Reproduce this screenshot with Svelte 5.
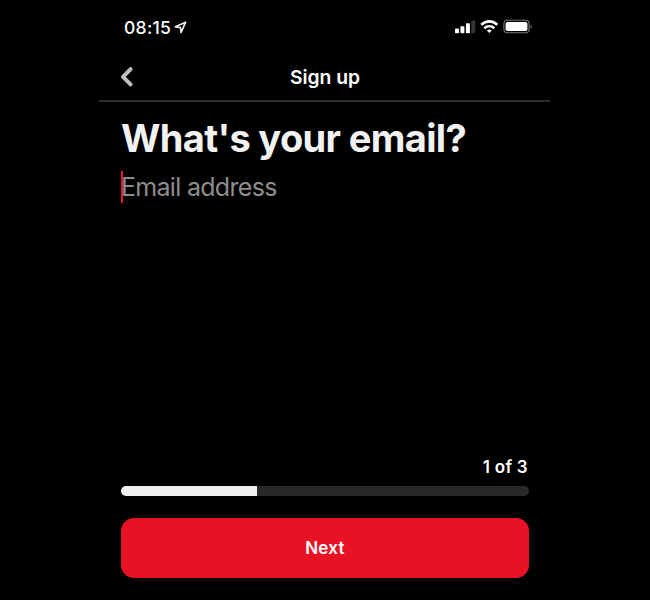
<script>
  const step = 1;
  const total = 3;
  let email = $state('');
</script>

<main>
  <section class="phone">
    <div class="status">
      <span class="time">08:15</span>
      <svg class="loc" width="13" height="13" viewBox="0 0 13 13">
        <path d="M11.6 1.2 L1.4 5.8 L6.4 6.5 L7.1 11.5 Z" />
      </svg>
      <svg class="signals" width="79" height="16" viewBox="0 0 79 16">
        <g fill="#fff">
          <rect x="0" y="9.4" width="4" height="4.8" rx="0.8" />
          <rect x="5.4" y="7.2" width="4" height="7" rx="0.8" />
          <rect x="10.9" y="4.2" width="4" height="10" rx="0.8" />
        </g>
        <rect x="16.3" y="1.7" width="3.9" height="12.5" rx="0.8" fill="#353535" />
        <g fill="none" stroke="#fff" stroke-width="2.6">
          <path d="M26.3 5.8 C31 1.2 37.6 1.2 42.3 5.8" />
          <path d="M29.3 9.2 C32.2 6.5 36.4 6.5 39.3 9.2" />
        </g>
        <path d="M31.9 11.4 Q34.3 9.7 36.7 11.4 L34.3 14 Z" fill="#fff" />
        <rect x="48.9" y="1.2" width="25.2" height="12.6" rx="3.5" fill="none" stroke="#777" stroke-width="1.1" />
        <rect x="50.6" y="2.9" width="21.8" height="9.2" rx="1.8" fill="#fff" />
        <path d="M75.6 5.4 Q78 7.5 75.6 9.7 Z" fill="#777" />
      </svg>
    </div>
    <header>
      <button class="back" aria-label="Back">
        <svg width="14" height="22" viewBox="0 0 14 22">
          <path d="M10.6 3.2 L3 10.8 L10.6 18.4" />
        </svg>
      </button>
      <h1>Sign up</h1>
    </header>
    <div class="content">
      <h2>What's your email?</h2>
      <div class="field">
        <input type="text" placeholder="Email address" bind:value={email} />
      </div>
      <footer>
        <p>{step} of {total}</p>
        <div class="track"><div class="fill" style:width="{(step / total) * 100}%"></div></div>
        <button class="next">Next</button>
      </footer>
    </div>
  </section>
</main>

<style>
  :global(body) { margin: 0; background: #000; }
  main {
    width: 650px;
    height: 600px;
    background: #000;
    font-family: Inter, "Liberation Sans", sans-serif;
    color: #fff;
    overflow: hidden;
  }
  button { border: 0; padding: 0; font-family: inherit; color: inherit; }
  .phone {
    width: 451px;
    height: 600px;
    margin-left: 99px;
    display: flex;
    flex-direction: column;
  }
  .status {
    display: flex;
    align-items: center;
    height: 54px;
    padding: 0 16px 0 25px;
    box-sizing: border-box;
  }
  .time { width: 47px; font-size: 17.5px; font-weight: 500; letter-spacing: 0.3px; white-space: nowrap; }
  .loc { margin-left: 3px; }
  .loc path { fill: none; stroke: #eee; stroke-width: 1.7; stroke-linejoin: round; }
  .signals { margin-left: auto; }
  header {
    display: grid;
    grid-template-columns: 40px 1fr 40px;
    align-items: center;
    height: 48px;
    padding: 0 20px 0 21px;
    box-sizing: border-box;
    border-bottom: 2px solid #2c2c2c;
  }
  .back { display: flex; justify-self: start; background: none; }
  .back path {
    fill: none;
    stroke: #bfbfbf;
    stroke-width: 4;
    stroke-linecap: round;
    stroke-linejoin: round;
  }
  h1 { margin: 0; text-align: center; font-size: 19.3px; line-height: 24px; font-weight: 600; }
  .content {
    flex: 1;
    display: flex;
    flex-direction: column;
    padding: 12px 21px 22px 22px;
  }
  h2 {
    margin: 0;
    font-size: 38px;
    line-height: 48px;
    font-weight: 700;
    letter-spacing: -0.65px;
    color: #f2f2f2;
    white-space: nowrap;
  }
  .field { display: flex; height: 32px; margin-top: 9px; border-left: 2px solid #f0102a; }
  input {
    flex: 1;
    border: 0;
    outline: 0;
    padding: 0;
    margin-left: -2px;
    background: transparent;
    color: #fff;
    font: 400 25px/32px Inter, sans-serif;
    letter-spacing: -0.7px;
  }
  input::placeholder { color: #8d8d8d; opacity: 1; }
  footer { margin-top: auto; }
  p {
    margin: 0 1px 8px 0;
    text-align: right;
    font-size: 17px;
    line-height: 22px;
    font-weight: 600;
    letter-spacing: 0.3px;
  }
  .track { height: 10px; border-radius: 5px; overflow: hidden; background: #292929; }
  .fill { height: 100%; background: #f0f0f0; }
  .next {
    display: block;
    width: 100%;
    height: 60px;
    margin-top: 22px;
    border-radius: 13px;
    background: #e81224;
    font-size: 17px;
    font-weight: 600;
    letter-spacing: 0.3px;
  }
</style>
